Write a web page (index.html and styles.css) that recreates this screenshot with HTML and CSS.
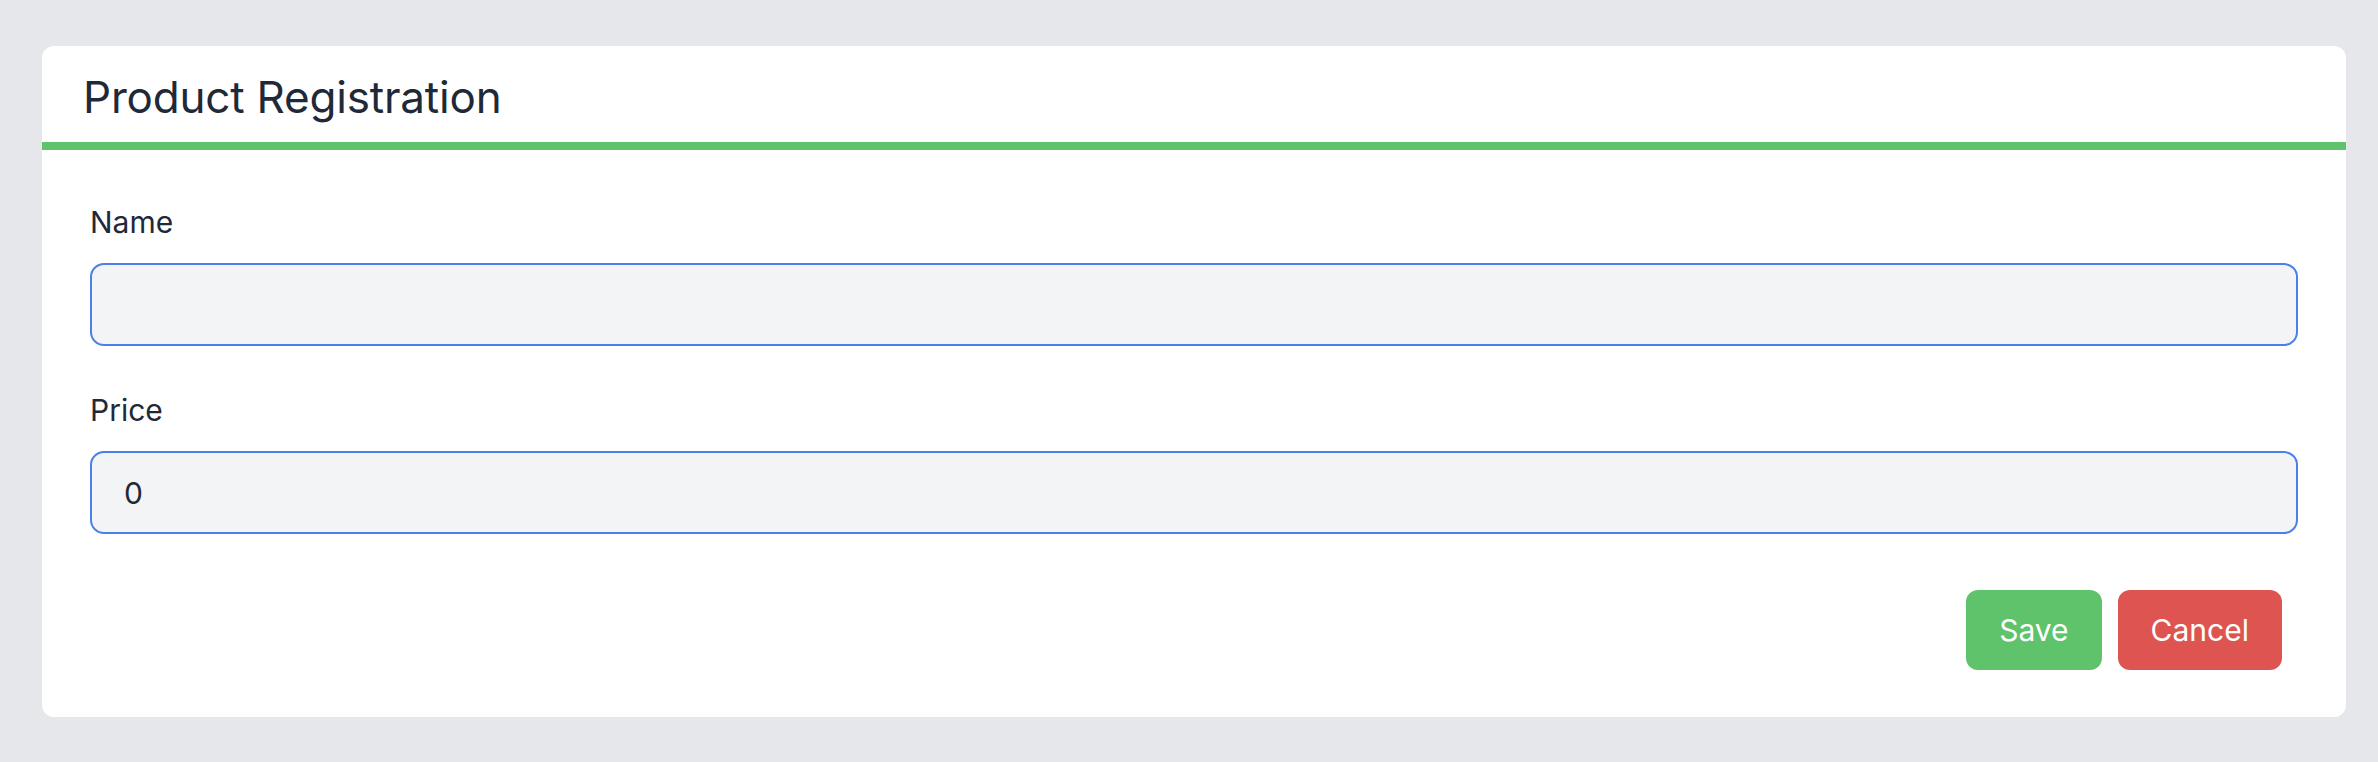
FILE: index.html
```html
<!DOCTYPE html>
<html lang="en">
<head>
<meta charset="utf-8">
<title>Product Registration</title>
<link rel="stylesheet" href="styles.css">
</head>
<body>
<div class="card">
  <div class="card-header">
    <h1 class="title">Product Registration</h1>
  </div>
  <form class="card-body">
    <div class="field">
      <label class="label" for="name">Name</label>
      <input class="input" id="name" type="text" value="">
    </div>
    <div class="field">
      <label class="label" for="price">Price</label>
      <input class="input" id="price" type="text" value="0">
    </div>
    <div class="actions">
      <button type="button" class="btn btn-save">Save</button>
      <button type="button" class="btn btn-cancel">Cancel</button>
    </div>
  </form>
</div>
</body>
</html>
```
FILE: styles.css
```css
* { box-sizing: border-box; }
html, body { margin: 0; }
body {
  background: #e5e7eb;
  padding: 46px 32px 45px 42px;
  font-family: Inter, "Noto Sans", "Liberation Sans", sans-serif;
  color: #1f2937;
}
.card {
  background: #ffffff;
  border-radius: 12px;
  overflow: hidden;
}
.card-header {
  padding: 24px 41px 18px;
  border-bottom: 8px solid #5ec36a;
}
.title {
  margin: 0;
  font-size: 44px;
  line-height: 54px;
  font-weight: 400;
  letter-spacing: -0.2px;
  color: #1f2937;
}
.card-body {
  padding: 49px 48px 47px;
  margin: 0;
}
.field { margin-bottom: 41px; }
.field:last-of-type { margin-bottom: 0; }
.label {
  display: block;
  font-size: 30px;
  line-height: 46px;
  margin-bottom: 18px;
  color: #1f2937;
}
.input {
  display: block;
  width: 100%;
  height: 83px;
  border: 2px solid #4a80e8;
  border-radius: 14px;
  background: #f3f4f6;
  padding: 0 32px;
  font-family: inherit;
  font-size: 30px;
  color: #1f2937;
  outline: none;
}
.actions {
  display: flex;
  justify-content: flex-end;
  gap: 16px;
  margin-top: 56px;
  padding-right: 16px;
}
.btn {
  height: 80px;
  padding: 0 33px;
  border: none;
  border-radius: 12px;
  font-family: inherit;
  font-size: 30px;
  color: #ffffff;
  cursor: pointer;
}
.btn-save { background: #5ec36a; }
.btn-cancel { background: #dd5450; }
```
